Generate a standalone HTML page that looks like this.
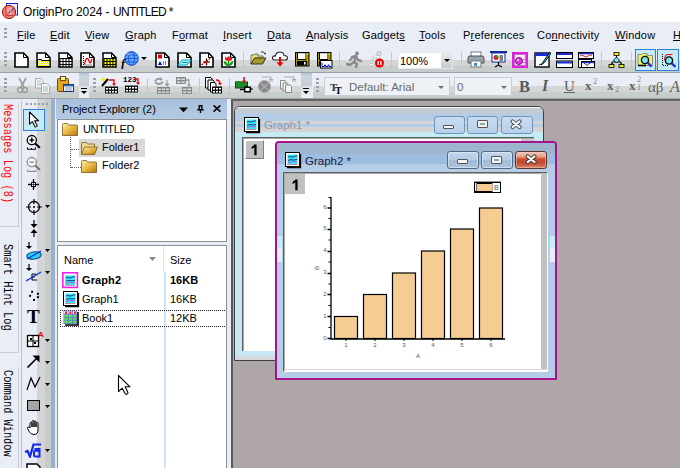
<!DOCTYPE html>
<html><head><meta charset="utf-8">
<style>
*{margin:0;padding:0;box-sizing:border-box}
html,body{width:680px;height:468px;overflow:hidden;background:#aea6a7;font-family:"Liberation Sans",sans-serif;font-size:12px;color:#000}
.a{position:absolute}
#title{left:0;top:0;width:680px;height:22px;background:#fff}
#menu{left:0;top:22px;width:680px;height:25px;background:#e9eef6}
.mi{position:absolute;top:7px;font-size:11px;letter-spacing:0.2px;color:#000;white-space:nowrap}
.mi u{text-decoration:underline;text-underline-offset:1px}
#tb{left:0;top:47px;width:680px;height:52px;background:#e9eef6}
.band{position:absolute;background:linear-gradient(#d6d6d6 0,#d4d5d5 6px,#c8cdce 6px,#c6cbcc 100%)}
.grip{position:absolute;width:3px;background:repeating-linear-gradient(#9aa0a8 0 2px,transparent 2px 4px)}
.sep{position:absolute;width:1px;background:#c2c6ca}
#left{left:0;top:99px;width:22px;height:369px;background:#e9eef6}
#vtb{left:22px;top:99px;width:35px;height:369px;background:linear-gradient(90deg,#e9eef6 0,#e9eef6 15px,#d4d4d4 15px,#d4d4d4 23px,#c6cbcb 23px,#c6cbcb 29px,#9ab0c8 29px,#9ab0c8 33px,#e6eaf0 33px)}
#pe{left:56px;top:99px;width:176px;height:369px;background:#e9eef6}
#mdi{left:231px;top:99px;width:449px;height:369px;background:#aea6a7;border-left:2px solid #5a5a5a;border-top:2px solid #646464}
.vt{position:absolute;font-family:"Liberation Mono",monospace;font-size:12px;line-height:16px;writing-mode:vertical-rl;white-space:nowrap;transform:scaleY(0.86);transform-origin:0 0}
</style></head>
<body>
<!-- Title bar -->
<div id="title" class="a">
  <svg class="a" style="left:2px;top:2px" width="18" height="18" viewBox="0 0 18 18">
    <rect x="4.5" y="1.5" width="11" height="11.5" fill="#eef4ff" stroke="#1828c8"/>
    <path d="M8 2V12M12 2V12M5 5H15M5 8H15" stroke="#b8d0f0" stroke-width="0.8"/>
    <circle cx="7" cy="10" r="6.6" fill="#f27c74" stroke="#9a1a14" stroke-width="1"/>
    <rect x="4" y="5.5" width="6" height="8" fill="#f8b0a0" opacity="0.8"/>
    <path d="M4 5V13.5H11" fill="none" stroke="#d02020" stroke-width="0.9"/>
    <path d="M5.5 12L7.5 10L9 9L10.5 7.5L12 6" fill="none" stroke="#1a2aa8" stroke-width="1.1" stroke-dasharray="1.2 0.8"/>
  </svg>
  <div class="a" style="left:23px;top:5px;font-size:12px;letter-spacing:-0.1px;color:#000;white-space:nowrap">OriginPro 2024 -</div><div class="a" style="left:113px;top:5px;font-size:12px;letter-spacing:-0.7px;color:#000;white-space:nowrap">UNTITLED *</div>
</div>
<!-- Menu -->
<div id="menu" class="a">
  <div class="grip" style="left:4px;top:6px;height:10px"></div>
  <div class="mi" style="left:17px"><u>F</u>ile</div>
  <div class="mi" style="left:50px"><u>E</u>dit</div>
  <div class="mi" style="left:85px"><u>V</u>iew</div>
  <div class="mi" style="left:125px"><u>G</u>raph</div>
  <div class="mi" style="left:172px">F<u>o</u>rmat</div>
  <div class="mi" style="left:223px"><u>I</u>nsert</div>
  <div class="mi" style="left:267px"><u>D</u>ata</div>
  <div class="mi" style="left:306px"><u>A</u>nalysis</div>
  <div class="mi" style="left:362px">Gadget<u>s</u></div>
  <div class="mi" style="left:419px"><u>T</u>ools</div>
  <div class="mi" style="left:463px">P<u>r</u>eferences</div>
  <div class="mi" style="left:537px">Co<u>n</u>nectivity</div>
  <div class="mi" style="left:615px"><u>W</u>indow</div>
  <div class="mi" style="left:673px"><u>H</u>elp</div>
</div>
<!-- Toolbars -->
<div id="tb" class="a">
  <!-- row1 band -->
  <div class="band" style="left:0;top:13px;width:680px;height:12px"></div>
  <div class="a" style="left:0;top:25px;width:680px;height:1px;background:#9ea2a6"></div>
  <!-- row2 bands -->
  <div class="band" style="left:0;top:39px;width:312px;height:12px"></div>
  <div class="band" style="left:313px;top:39px;width:367px;height:12px"></div>
  <div class="a" style="left:0;top:51px;width:680px;height:1px;background:#9ea2a6"></div>
  <div class="grip" style="left:4px;top:5px;height:14px"></div>
  <div class="grip" style="left:4px;top:31px;height:14px"></div>
  <div class="grip" style="left:93px;top:31px;height:14px"></div>
  <div class="grip" style="left:316px;top:31px;height:14px"></div>
  <!-- separators row1 -->
  <div class="sep" style="left:243px;top:5px;height:16px"></div>
  <div class="sep" style="left:339px;top:5px;height:16px"></div>
  <div class="sep" style="left:391px;top:5px;height:16px"></div>
  <div class="sep" style="left:461px;top:5px;height:16px"></div>
  <div class="sep" style="left:601px;top:5px;height:16px"></div>
  <div class="sep" style="left:631px;top:5px;height:16px"></div>
  <!-- separators row2 -->
  <div class="sep" style="left:147px;top:31px;height:17px"></div>
  <div class="sep" style="left:199px;top:31px;height:17px"></div>
  <div class="sep" style="left:229px;top:31px;height:17px"></div>
  <!-- chevrons -->
  <div class="a" style="left:79px;top:26px;width:10px;height:25px;background:linear-gradient(#a8c0dc 0,#cdd6de 3px,#c6ccd1 12px,#dde2e8 14px,#eef2f6 100%)"></div>
  <svg class="a" style="left:80px;top:41px" width="8" height="8"><rect x="1" y="0" width="6" height="1" fill="#000"/><path d="M1 3 H7 L4 6 Z" fill="#000"/></svg>
  <div class="a" style="left:301px;top:26px;width:11px;height:25px;background:linear-gradient(#a8c0dc 0,#cdd6de 3px,#c6ccd1 12px,#dde2e8 14px,#eef2f6 100%)"></div>
  <svg class="a" style="left:302px;top:41px" width="8" height="8"><rect x="1" y="0" width="6" height="1" fill="#000"/><path d="M1 3 H7 L4 6 Z" fill="#000"/></svg>

  <!-- ROW 1 ICONS (top = 5 => y 52) -->
  <svg class="a" style="left:14px;top:5px" width="16" height="16" viewBox="0 0 16 16"><path d="M1 1H9.5L14 5.5V15H1Z" fill="#fff" stroke="#000" stroke-width="1.6"/><path d="M9.5 1V5.5H14" fill="none" stroke="#000"/></svg>
  <svg class="a" style="left:36px;top:5px" width="16" height="16" viewBox="0 0 16 16"><defs><pattern id="chk" width="2" height="2" patternUnits="userSpaceOnUse"><rect width="2" height="2" fill="#f4f000"/><rect width="1" height="1" fill="#fffef0"/><rect x="1" y="1" width="1" height="1" fill="#fffef0"/></pattern></defs><path d="M1 1H9.5L14 5.5V15H1Z" fill="#fff" stroke="#000" stroke-width="1.5"/><path d="M9.5 1V5.5H14" fill="none" stroke="#000"/><path d="M1.5 14.5V7.5H5.5V8.5H14V14.5Z" fill="url(#chk)" stroke="#000" stroke-width="1"/></svg>
  <svg class="a" style="left:58px;top:5px" width="16" height="16" viewBox="0 0 16 16"><path d="M1 1H9.5L14 5.5V15H1Z" fill="#fff" stroke="#000" stroke-width="1.5"/><path d="M9.5 1V5.5H14" fill="none" stroke="#000"/><rect x="1.5" y="6" width="12.5" height="9" fill="#000"/><g fill="#fff"><rect x="2.5" y="7" width="2" height="2"/><rect x="5.5" y="7" width="2" height="2"/><rect x="8.5" y="7" width="2" height="2"/><rect x="11.5" y="7" width="1.8" height="2"/><rect x="2.5" y="10" width="2" height="2"/><rect x="5.5" y="10" width="2" height="2"/><rect x="8.5" y="10" width="2" height="2"/><rect x="11.5" y="10" width="1.8" height="2"/><rect x="2.5" y="13" width="2" height="1.3"/><rect x="5.5" y="13" width="2" height="1.3"/><rect x="8.5" y="13" width="2" height="1.3"/><rect x="11.5" y="13" width="1.8" height="1.3"/></g></svg>
  <svg class="a" style="left:80px;top:5px" width="16" height="16" viewBox="0 0 16 16"><path d="M1 1H9.5L14 5.5V15H1Z" fill="#fff" stroke="#000" stroke-width="1.6"/><path d="M9.5 1V5.5H14" fill="none" stroke="#000"/><path d="M3.5 4V13H12" fill="none" stroke="#000" stroke-dasharray="1 1"/><path d="M4.5 12C6 5 8 5 9 9S11 10 12 7" fill="none" stroke="#e00" stroke-width="1.3"/></svg>
  <svg class="a" style="left:102px;top:5px" width="16" height="16" viewBox="0 0 16 16"><path d="M1 1H9.5L14 5.5V15H1Z" fill="#fff" stroke="#000" stroke-width="1.5"/><path d="M9.5 1V5.5H14" fill="none" stroke="#000"/><rect x="1.5" y="6" width="12.5" height="9" fill="#000"/><g fill="#f8f000"><rect x="2.5" y="7" width="2" height="2"/><rect x="5.5" y="7" width="2" height="2"/><rect x="8.5" y="7" width="2" height="2"/><rect x="11.5" y="7" width="1.8" height="2"/><rect x="2.5" y="10" width="2" height="2"/><rect x="5.5" y="10" width="2" height="2"/><rect x="8.5" y="10" width="2" height="2"/><rect x="11.5" y="10" width="1.8" height="2"/><rect x="2.5" y="13" width="2" height="1.3"/><rect x="5.5" y="13" width="2" height="1.3"/><rect x="8.5" y="13" width="2" height="1.3"/><rect x="11.5" y="13" width="1.8" height="1.3"/></g></svg>
  <svg class="a" style="left:121px;top:4px" width="20" height="18" viewBox="0 0 20 18"><circle cx="10.5" cy="7.5" r="6.8" fill="#58a8ff" stroke="#1a48d0" stroke-width="1"/><ellipse cx="10.5" cy="7.5" rx="3" ry="6.8" fill="none" stroke="#1a48d0" stroke-width="0.8"/><path d="M3.7 7.5H17.3M4.8 4H16.2M4.8 11H16.2" stroke="#1a48d0" stroke-width="0.8"/><path d="M6 3.5Q8 2.5 9 4" stroke="#c0f0ff" stroke-width="0.8" fill="none"/><text x="0" y="17" font-family="Liberation Serif" font-style="italic" font-weight="bold" font-size="12" fill="#000">f</text></svg>
  <svg class="a" style="left:141px;top:10px" width="6" height="4"><path d="M0 0H6L3 3Z" fill="#000"/></svg>
  <svg class="a" style="left:155px;top:5px" width="16" height="16" viewBox="0 0 16 16"><path d="M1 1H9.5L14 5.5V15H1Z" fill="#fff" stroke="#000" stroke-width="1.6"/><path d="M9.5 1V5.5H14" fill="none" stroke="#000"/><rect x="3" y="2.5" width="4" height="4" fill="#e00"/><path d="M3 13L5 9L7 13Z" fill="#0000e0"/><path d="M8 10H12M8 12H12" stroke="#000" stroke-dasharray="1 1"/></svg>
  <svg class="a" style="left:177px;top:5px" width="16" height="16" viewBox="0 0 16 16"><path d="M1 1H9.5L14 5.5V15H1Z" fill="#fff" stroke="#000" stroke-width="1.6"/><path d="M9.5 1V5.5H14" fill="none" stroke="#000"/><path d="M5 8H14L10 13H1Z" fill="#9ff" stroke="#19b" stroke-width="1"/><path d="M5 10.5H11" stroke="#19b"/></svg>
  <svg class="a" style="left:199px;top:5px" width="16" height="16" viewBox="0 0 16 16"><path d="M1 1H9.5L14 5.5V15H1Z" fill="#fff" stroke="#000" stroke-width="1.6"/><path d="M9.5 1V5.5H14" fill="none" stroke="#000"/><path d="M2.5 13L13 5" stroke="#e00" stroke-width="1.3" stroke-dasharray="2 1"/><path d="M4 10H11M7.5 6.5V13.5" stroke="#000" stroke-width="1.2"/><circle cx="7.5" cy="10" r="1.3" fill="#e00"/></svg>
  <svg class="a" style="left:221px;top:5px" width="16" height="16" viewBox="0 0 16 16"><path d="M1 1H9.5L14 5.5V15H1Z" fill="#fff" stroke="#000" stroke-width="1.6"/><path d="M9.5 1V5.5H14" fill="none" stroke="#000"/><path d="M4 4L5.5 6L7.5 4L9.5 6L11 4V8Q7.5 10 4 8Z" fill="#e02020"/><path d="M7.5 9V14" stroke="#1a8a1a" stroke-width="1.3"/><path d="M2.5 9Q6 9 7.5 14Q3 14 2.5 9Z M12.5 9Q9 9 7.5 14Q12 14 12.5 9Z" fill="#1aa01a"/></svg>
  <!-- open folder -->
  <svg class="a" style="left:250px;top:3px" width="18" height="16" viewBox="0 0 18 16"><path d="M11 2Q14 1 15 4" fill="none" stroke="#333" stroke-width="1"/><path d="M14 3.5L15.5 5L16 2.5Z" fill="#333"/><path d="M1 5H4L5 4H8V6H13V8H5L1 14Z" fill="#f0e070" stroke="#555" stroke-width="0.8"/><path d="M1 14L4.5 8H16L12.5 14Z" fill="#a89a2c" stroke="#333" stroke-width="1"/></svg>
  <!-- cloud -->
  <svg class="a" style="left:271px;top:3px" width="18" height="18" viewBox="0 0 18 18"><path d="M4 10Q1 10 1.5 7.5Q2 5.5 4.5 6Q5 2 9 2Q12.5 2 13 5.5Q16.5 5.5 16.5 8Q16.5 10 14 10Z" fill="#fff" stroke="#222" stroke-width="1.1"/><path d="M9 7V13" stroke="#e00" stroke-width="2"/><path d="M5.5 12.5H12.5L9 16.5Z" fill="#e00"/></svg>
  <!-- floppy -->
  <svg class="a" style="left:295px;top:5px" width="15" height="15" viewBox="0 0 15 15"><rect x="0" y="0" width="14.5" height="14.5" fill="#000"/><rect x="1" y="1" width="12.5" height="12.5" fill="#a89800"/><rect x="2" y="1" width="9" height="7" fill="#000"/><rect x="3" y="1.2" width="7.5" height="5.8" fill="#fff"/><rect x="2" y="9" width="10" height="4.5" fill="#000"/><rect x="9" y="10" width="1.6" height="2.5" fill="#fff"/><rect x="12" y="1.5" width="1" height="1" fill="#fff"/></svg>
  <svg class="a" style="left:317px;top:5px" width="16" height="17" viewBox="0 0 16 17"><rect x="0" y="0" width="14.5" height="14.5" fill="#000"/><rect x="1" y="1" width="12.5" height="12.5" fill="#a89800"/><rect x="2" y="1" width="9" height="7" fill="#000"/><rect x="3" y="1.2" width="7.5" height="5.8" fill="#fff"/><rect x="2" y="9" width="10" height="4.5" fill="#000"/><rect x="12" y="1.5" width="1" height="1" fill="#fff"/><rect x="3" y="8" width="12.5" height="8.5" fill="#000"/><rect x="4" y="9" width="10.5" height="6.5" fill="#fff"/><path d="M5 14.5V10.5M5 14.5H7.5V13H8.5V14.5H11V13H12V14.5H14" fill="none" stroke="#0010e0" stroke-width="1"/></svg>
  <!-- running men -->
  <svg class="a" style="left:346px;top:4px" width="17" height="17" viewBox="0 0 17 17"><circle cx="11" cy="2.5" r="2" fill="#8a8a8a"/><path d="M6 6L10 5L12 9L15 10M10 5L8 11L11 13L10 16M8 11L4 14L1 13M7 6L4 9" fill="none" stroke="#8a8a8a" stroke-width="2.4" stroke-linecap="round"/></svg>
  <svg class="a" style="left:368px;top:4px" width="17" height="17" viewBox="0 0 17 17"><circle cx="11" cy="2.5" r="2" fill="none" stroke="#999" stroke-width="0.8"/><path d="M6 6L10 5L12 9L15 10M10 5L8 11L11 13L10 16M8 11L4 14L1 13M7 6L4 9" fill="none" stroke="#bbb" stroke-width="2.2" stroke-linecap="round"/><path d="M6 6L10 5L12 9L15 10M10 5L8 11L11 13L10 16M8 11L4 14L1 13M7 6L4 9" fill="none" stroke="#fff" stroke-width="1" stroke-linecap="round"/><circle cx="11.5" cy="12" r="4.5" fill="#e00"/><rect x="9.5" y="10" width="1.3" height="4" fill="#fff"/><rect x="12.2" y="10" width="1.3" height="4" fill="#fff"/></svg>
  <!-- 100% combo -->
  <div class="a" style="left:398px;top:5px;width:55px;height:17px;background:#fff;border:1px solid #e4e8ee"></div>
  <div class="a" style="left:441px;top:6px;width:11px;height:15px;background:linear-gradient(#e8ebef,#c7cbd0)"></div>
  <svg class="a" style="left:444px;top:12px" width="6" height="4"><path d="M0 0H6L3 3Z" fill="#000"/></svg>
  <div class="a" style="left:400px;top:8px;font-size:11px;color:#000">100%</div>
  <!-- printer -->
  <svg class="a" style="left:467px;top:4px" width="18" height="17" viewBox="0 0 18 17"><rect x="4" y="1" width="10" height="5" fill="#fff" stroke="#777"/><path d="M1 7Q1 5 3 5H15Q17 5 17 7V12H1Z" fill="#9aa4ae" stroke="#555"/><rect x="4" y="10" width="10" height="6" fill="#fff" stroke="#777"/><rect x="7" y="12" width="3" height="3" fill="#3a8ad8"/></svg>
  <!-- presentation -->
  <svg class="a" style="left:490px;top:4px" width="17" height="17" viewBox="0 0 17 17"><rect x="0" y="0" width="17" height="2" fill="#1428a0"/><rect x="2" y="2" width="13" height="9" fill="#fff" stroke="#1428a0"/><circle cx="6" cy="6.5" r="2.5" fill="#e02020"/><path d="M6 6.5V4A2.5 2.5 0 0 1 8.5 6.5Z" fill="#20a020"/><path d="M9.5 5H13M9.5 7H13M9.5 9H13" stroke="#000" stroke-width="1"/><path d="M8.5 11V14M5 16L8.5 14L12 16" fill="none" stroke="#000" stroke-width="1.3"/></svg>
  <!-- magenta -->
  <svg class="a" style="left:512px;top:5px" width="16" height="16" viewBox="0 0 16 16"><rect x="1" y="1" width="14" height="14" fill="#f4e6f4" stroke="#e020e0" stroke-width="2"/><rect x="2.5" y="2.5" width="11" height="11" fill="#f8f0f8" stroke="#a020a0" stroke-width="0.6"/><circle cx="7" cy="9" r="3.6" fill="#e030e0" stroke="#800080" stroke-width="0.8"/><circle cx="6" cy="8" r="1" fill="#fff"/><path d="M12 7V8M12 10V11" stroke="#800080"/></svg>
  <!-- pen doc -->
  <svg class="a" style="left:534px;top:4px" width="17" height="17" viewBox="0 0 17 17"><rect x="1" y="2" width="14" height="14" fill="#fff" stroke="#000" stroke-width="1.4"/><rect x="1" y="2" width="14" height="3" fill="#1a2ed0"/><path d="M16 1L9 11L7 14L10 12L16.5 3Z" fill="#20c8d8" stroke="#000" stroke-width="0.9"/><path d="M5 14L7 13" stroke="#000"/></svg>
  <!-- two bars -->
  <svg class="a" style="left:556px;top:5px" width="17" height="16" viewBox="0 0 17 16"><rect x="0.5" y="0.5" width="16" height="6" fill="#fff" stroke="#000"/><rect x="1" y="1" width="15" height="2" fill="#1a2ed0"/><rect x="0.5" y="9" width="16" height="6.5" fill="#fff" stroke="#000"/><rect x="1" y="9.5" width="15" height="2" fill="#1a2ed0"/></svg>
  <!-- layer doc -->
  <svg class="a" style="left:578px;top:5px" width="17" height="16" viewBox="0 0 17 16"><rect x="0.5" y="0.5" width="15" height="6" fill="#fff" stroke="#000"/><rect x="1" y="0.8" width="14" height="1.5" fill="#1a2ed0"/><path d="M2 4Q4 2 6 4T10 4T14 3.5" fill="none" stroke="#e02020" stroke-width="1"/><rect x="0.5" y="7.5" width="13" height="8" fill="#fff" stroke="#000"/><rect x="3.5" y="9.5" width="13" height="6" fill="#fff" stroke="#000"/><rect x="4" y="10" width="12" height="1.2" fill="#1a2ed0"/><path d="M6 11L9 13.5L12 11" fill="none" stroke="#000" stroke-width="0.8"/></svg>
  <!-- network -->
  <svg class="a" style="left:608px;top:5px" width="17" height="17" viewBox="0 0 17 17"><path d="M8.5 3V6M4 11V13M13 11V13M8.5 10H4V12M8.5 10H13V12" fill="none" stroke="#000"/><rect x="6" y="0.5" width="5" height="3" fill="#f4ec20" stroke="#000" stroke-width="0.8"/><path d="M8.5 5L11.5 8L8.5 11L5.5 8Z" fill="#7de0ea" stroke="#000" stroke-width="0.8"/><rect x="1" y="12.5" width="5" height="3" fill="#f4ec20" stroke="#000" stroke-width="0.8"/><rect x="11" y="12.5" width="5" height="3" fill="#f4ec20" stroke="#000" stroke-width="0.8"/></svg>
  <!-- selected buttons -->
  <div class="a" style="left:635px;top:2px;width:21px;height:22px;background:#c6eaf6;border:1.5px solid #2a82e0"></div>
  <div class="a" style="left:657px;top:2px;width:22px;height:22px;background:#c6eaf6;border:1.5px solid #2a82e0"></div>
  <svg class="a" style="left:637px;top:5px" width="17" height="17" viewBox="0 0 17 17"><path d="M1 2.5H5L6 1.5H10V3.5H15.5V13.5H1Z" fill="#f0f060" stroke="#777" stroke-width="0.8"/><path d="M1 13.5H9" stroke="#000" stroke-width="1.6"/><circle cx="8" cy="8" r="3.6" fill="#80e4ee" stroke="#000" stroke-width="1.4"/><path d="M10.6 10.6L14.6 14.6" stroke="#1a2ed0" stroke-width="2.2"/></svg>
  <svg class="a" style="left:660px;top:5px" width="17" height="17" viewBox="0 0 17 17"><path d="M2.5 2V13.5H8" fill="none" stroke="#000" stroke-dasharray="1 1"/><path d="M4.5 8Q5 2 8 2.5T12.5 2" fill="none" stroke="#e02020" stroke-width="1.1"/><circle cx="9" cy="8.5" r="3.6" fill="#80e4ee" stroke="#000" stroke-width="1.4"/><path d="M11.6 11.1L15.4 14.9" stroke="#1a2ed0" stroke-width="2.2"/></svg>

  <!-- ROW 2 ICONS (top=30 => y 77) -->
  <svg class="a" style="left:17px;top:30px" width="11" height="17" viewBox="0 0 11 17"><path d="M2 1L7 10M9 1L4 10" stroke="#9a9a9a" stroke-width="1.6"/><circle cx="3" cy="13" r="2.5" fill="none" stroke="#9a9a9a" stroke-width="1.4"/><circle cx="8" cy="13" r="2.5" fill="none" stroke="#9a9a9a" stroke-width="1.4"/></svg>
  <svg class="a" style="left:35px;top:31px" width="16" height="16" viewBox="0 0 16 16"><path d="M0.5 0.5H6L8 2.5V10H0.5Z" fill="#f4f4f4" stroke="#aaa"/><path d="M2 3H6M2 5H6M2 7H6" stroke="#bbb"/><path d="M6.5 5.5H12L14.5 8V15.5H6.5Z" fill="#f8f8f8" stroke="#aaa"/><path d="M8 9H13M8 11H13M8 13H13" stroke="#9bb"/></svg>
  <svg class="a" style="left:57px;top:29px" width="17" height="17" viewBox="0 0 17 17"><rect x="0.5" y="2.5" width="11" height="13" rx="1" fill="#e4a820" stroke="#6a4a10"/><rect x="3.5" y="0.5" width="5" height="4" fill="#fff2a0" stroke="#6a4a10"/><rect x="6.5" y="8.5" width="10" height="7" fill="#fff" stroke="#1a3a6a"/><rect x="7" y="9" width="9" height="1.5" fill="#3a6ab8"/><path d="M8 12H15M8 14H15" stroke="#7a9ad8"/></svg>
  <svg class="a" style="left:101px;top:30px" width="18" height="17" viewBox="0 0 18 17"><path d="M1 1L4 4M4 1L1 4M2.5 0V5M0 2.5H5" stroke="#f4f020" stroke-width="1"/><path d="M7 2L1 9" stroke="#000" stroke-width="2"/><path d="M8 3H13V8" fill="none" stroke="#e00" stroke-width="1.3"/><path d="M11 6.5H15L13 9Z" fill="#e00"/><rect x="4" y="9.5" width="13" height="7" fill="#111"/><g fill="#fff"><rect x="5" y="11" width="2" height="1.5"/><rect x="8" y="11" width="2" height="1.5"/><rect x="11" y="11" width="2" height="1.5"/><rect x="14" y="11" width="2" height="1.5"/><rect x="5" y="14" width="2" height="1.5"/><rect x="8" y="14" width="2" height="1.5"/><rect x="11" y="14" width="2" height="1.5"/><rect x="14" y="14" width="2" height="1.5"/></g></svg>
  <svg class="a" style="left:123px;top:29px" width="18" height="17" viewBox="0 0 18 17"><text x="0" y="6" font-family="Liberation Mono" font-weight="bold" font-size="7.5" fill="#000">123</text><path d="M12 3H15V7" fill="none" stroke="#e00" stroke-width="1.3"/><path d="M13 6.5H17L15 9Z" fill="#e00"/><rect x="2" y="9.5" width="13" height="7" fill="#111"/><g fill="#fff"><rect x="3" y="11" width="2" height="1.5"/><rect x="6" y="11" width="2" height="1.5"/><rect x="9" y="11" width="2" height="1.5"/><rect x="12" y="11" width="2" height="1.5"/><rect x="3" y="14" width="2" height="1.5"/><rect x="6" y="14" width="2" height="1.5"/><rect x="9" y="14" width="2" height="1.5"/><rect x="12" y="14" width="2" height="1.5"/></g></svg>
  <svg class="a" style="left:154px;top:30px" width="17" height="17" viewBox="0 0 17 17"><path d="M1 4Q4 0 8 3M8 3L6 1M1 5Q5 9 9 5" fill="none" stroke="#999" stroke-width="1.8"/><path d="M13 3V8M11 7H15L13 9Z" fill="#999" stroke="#999"/><rect x="3" y="10" width="13" height="7" fill="#888"/><g fill="#ddd"><rect x="4" y="11.5" width="3" height="1.5"/><rect x="8" y="11.5" width="3" height="1.5"/><rect x="12" y="11.5" width="3" height="1.5"/><rect x="4" y="14.5" width="3" height="1.5"/><rect x="8" y="14.5" width="3" height="1.5"/><rect x="12" y="14.5" width="3" height="1.5"/></g></svg>
  <svg class="a" style="left:176px;top:29px" width="17" height="18" viewBox="0 0 17 18"><rect x="0" y="1" width="10" height="7" fill="#888"/><g fill="#ddd"><rect x="1" y="2.5" width="3.5" height="1.5"/><rect x="5.5" y="2.5" width="3.5" height="1.5"/><rect x="1" y="5.5" width="3.5" height="1.5"/><rect x="5.5" y="5.5" width="3.5" height="1.5"/></g><path d="M10 4H13V9" fill="none" stroke="#999" stroke-width="1.3"/><path d="M11 8.5H15L13 11Z" fill="#999"/><rect x="6" y="11" width="10" height="7" fill="#888"/><g fill="#ddd"><rect x="7" y="12.5" width="3.5" height="1.5"/><rect x="11.5" y="12.5" width="3.5" height="1.5"/><rect x="7" y="15.5" width="3.5" height="1.5"/><rect x="11.5" y="15.5" width="3.5" height="1.5"/></g></svg>
  <svg class="a" style="left:205px;top:30px" width="18" height="17" viewBox="0 0 18 17"><path d="M0.5 0.5H6L7 2V11H0.5Z" fill="#fff" stroke="#000"/><path d="M3 3H8L9 4.5V13H3Z" fill="#fff" stroke="#000"/><path d="M5.5 5.5H10L11 7V15H5.5Z" fill="#fff" stroke="#000"/><path d="M11 3Q15 3 15 7" fill="none" stroke="#e00" stroke-width="1.5"/><path d="M13 6H17L15 8.5Z" fill="#e00"/><rect x="7" y="9.5" width="10" height="7" fill="#111"/><g fill="#fff"><rect x="8" y="11" width="2" height="1.5"/><rect x="11" y="11" width="2" height="1.5"/><rect x="14" y="11" width="2" height="1.5"/><rect x="8" y="14" width="2" height="1.5"/><rect x="11" y="14" width="2" height="1.5"/><rect x="14" y="14" width="2" height="1.5"/></g></svg>
  <svg class="a" style="left:235px;top:30px" width="18" height="17" viewBox="0 0 18 17"><rect x="0.5" y="5" width="12" height="6" fill="#1a8a2a" stroke="#0a4a10"/><rect x="0.5" y="4" width="5" height="2" fill="#1a8a2a"/><path d="M9 0V4" stroke="#e00" stroke-width="1.5"/><path d="M7 3.5H11L9 6Z" fill="#e00"/><path d="M5 12.5H9" stroke="#000" stroke-width="1.5"/><rect x="9" y="9.5" width="7" height="6" fill="#000"/><path d="M16 12H17.5" stroke="#000" stroke-width="1.3"/><rect x="10.5" y="11" width="4" height="3" fill="#fff"/><path d="M9 10.5L12.5 9.5" stroke="#000"/></svg>
  <svg class="a" style="left:257px;top:29px" width="17" height="17" viewBox="0 0 17 17"><path d="M5 1H14V3" fill="none" stroke="#aaa" stroke-width="1"/><path d="M12 3.5H16M13 3.5V6M15 3.5V6" stroke="#aaa" stroke-width="1"/><circle cx="7.5" cy="10.5" r="6" fill="#888" stroke="#aaa"/><path d="M4 7L11 14M11 7L4 14" stroke="#aaa" stroke-width="1.5"/></svg>
  <svg class="a" style="left:280px;top:29px" width="17" height="17" viewBox="0 0 17 17"><path d="M4 1H14V3" fill="none" stroke="#aaa" stroke-width="1"/><path d="M12 3.5H16M13 3.5V6M15 3.5V6" stroke="#aaa" stroke-width="1"/><path d="M0.5 4.5H5L6 6V13H0.5Z" fill="#f4f4f4" stroke="#888"/><path d="M3 7H7L8 8.5V15H3Z" fill="#f4f4f4" stroke="#888"/><path d="M5.5 9H10L11.5 10.5V16.5H5.5Z" fill="#f4f4f4" stroke="#888"/></svg>

  <!-- FORMAT TOOLBAR -->
  <div class="a" style="left:324px;top:30px;width:126px;height:19px;background:#eef1f6;border:1px solid #c9ced6"></div>
  <svg class="a" style="left:330px;top:35px" width="15" height="12" viewBox="0 0 15 12"><text x="0" y="9" font-family="Liberation Serif" font-weight="bold" font-size="11" fill="#333">T</text><text x="5" y="11.5" font-family="Liberation Serif" font-weight="bold" font-size="10" fill="#000">T</text></svg>
  <div class="a" style="left:349px;top:34px;font-size:11.5px;color:#6b6b6b;white-space:nowrap">Default: Arial</div>
  <svg class="a" style="left:438px;top:39px" width="6" height="4"><path d="M0 0H6L3 3Z" fill="#707070"/></svg>
  <div class="a" style="left:454px;top:30px;width:58px;height:19px;background:#eef1f6;border:1px solid #c9ced6"></div>
  <div class="a" style="left:457px;top:34px;font-size:11.5px;color:#6b6b6b">0</div>
  <svg class="a" style="left:501px;top:39px" width="6" height="4"><path d="M0 0H6L3 3Z" fill="#707070"/></svg>
  <div class="a" style="left:519px;top:30px;font-family:'Liberation Serif';font-weight:bold;font-size:16.5px;color:#535b5b;letter-spacing:0">B</div>
  <div class="a" style="left:542px;top:30px;font-family:'Liberation Serif';font-weight:bold;font-style:italic;font-size:16px;color:#535b5b">I</div>
  <div class="a" style="left:564px;top:31px;font-family:'Liberation Serif';font-size:15px;color:#5a6262;text-decoration:underline;text-underline-offset:1px">U</div>
  <div class="a" style="left:585px;top:31px;font-family:'Liberation Serif';font-weight:bold;font-size:13px;color:#5a6262;line-height:16px">x</div><div class="a" style="left:593px;top:29px;font-family:'Liberation Serif';font-size:8.5px;color:#8a8a8a;line-height:10px">2</div>
  <div class="a" style="left:607px;top:31px;font-family:'Liberation Serif';font-weight:bold;font-size:13px;color:#5a6262;line-height:16px">x</div><div class="a" style="left:615px;top:37px;font-family:'Liberation Serif';font-size:8.5px;color:#8a8a8a;line-height:10px">2</div>
  <div class="a" style="left:629px;top:31px;font-family:'Liberation Serif';font-weight:bold;font-size:13px;color:#5a6262;line-height:16px">x</div>
  <div class="a" style="left:637px;top:28px;font-family:'Liberation Serif';font-size:8.5px;color:#8a8a8a;line-height:8px">2<br>1</div>
  <div class="a" style="left:648px;top:32px;font-family:'Liberation Serif';font-size:15px;color:#5a6262">αβ</div>
  <div class="a" style="left:670px;top:31px;font-family:'Liberation Serif';font-style:italic;font-size:16px;color:#5a6262">A</div>
</div>
<!-- Left strip -->
<div id="left" class="a"></div>
<div class="a" style="left:18px;top:103px;width:1px;height:123px;background:#c9ccd0"></div>
<div class="a" style="left:0;top:226px;width:19px;height:1px;background:#c9ccd0"></div>
<div class="a" style="left:18px;top:241px;width:1px;height:111px;background:#c9ccd0"></div>
<div class="a" style="left:0;top:352px;width:19px;height:1px;background:#c9ccd0"></div>
<div class="a" style="left:18px;top:367px;width:1px;height:101px;background:#c9ccd0"></div>
<div class="a" style="left:21px;top:101px;width:1px;height:367px;background:#c4c4c4"></div>
<div class="vt" style="left:-1px;top:104px;color:#f00">Messages Log (8)</div>
<div class="vt" style="left:-1px;top:244px;color:#000">Smart Hint Log</div>
<div class="vt" style="left:-1px;top:370px;color:#000">Command Window</div>
<!-- Vertical toolbar -->
<div id="vtb" class="a"></div>
<div class="a" style="left:26px;top:103px;width:24px;height:2px;background:repeating-linear-gradient(90deg,#9aa0a8 0 2px,transparent 2px 4px)"></div>
<div class="a" style="left:23px;top:109px;width:22px;height:22px;background:#c6eaf6;border:1.5px solid #2a82e0"></div>
<svg class="a" style="left:28px;top:111px" width="14" height="18" viewBox="0 0 14 18"><path d="M1.5 1V13.2L4.3 10.6L6.9 15.6Q7.3 16.2 7.9 15.9L8.9 15.4Q9.4 15 9.1 14.4L6.6 9.8H10.6Z" fill="#fff" stroke="#000" stroke-width="1.05" stroke-linejoin="round"/></svg>
<!-- zoom in -->
<svg class="a" style="left:25px;top:134px" width="20" height="18" viewBox="0 0 20 18"><circle cx="6.8" cy="6.1" r="4.6" fill="#fff" stroke="#000" stroke-width="1.3"/><path d="M4.3 6.1H9.3M6.8 3.6V8.6" stroke="#000" stroke-width="1.4"/><path d="M10.2 9.5L14.8 13.8" stroke="#000" stroke-width="2.2"/><path d="M2.5 13.3V15.3H10.5V13.3M6.5 14V15.3" fill="none" stroke="#000" stroke-width="1"/></svg>
<svg class="a" style="left:25px;top:156px" width="20" height="18" viewBox="0 0 20 18"><circle cx="6.8" cy="6.1" r="4.6" fill="#fff" stroke="#8a8a8a" stroke-width="1.3"/><path d="M4.3 6.1H9.3" stroke="#8a8a8a" stroke-width="1.4"/><path d="M10.2 9.5L14.8 13.8" stroke="#707070" stroke-width="2.2"/><path d="M2.5 13.5V15.5H11V13.5M5.3 14.3V15.5M8.1 14.3V15.5" fill="none" stroke="#8a8a8a" stroke-width="1"/></svg>
<svg class="a" style="left:27px;top:178px" width="14" height="14" viewBox="0 0 14 14"><path d="M6.5 1V12M1 6.5H12" stroke="#000" stroke-width="1.3"/><rect x="4.5" y="4.5" width="4" height="4" fill="#fff" stroke="#000" stroke-width="1"/><path d="M6.5 5V8M5 6.5H8" stroke="#000" stroke-width="0.7"/></svg>
<svg class="a" style="left:25px;top:198px" width="18" height="18" viewBox="0 0 18 18"><circle cx="9" cy="9" r="5.5" fill="none" stroke="#000" stroke-width="1.3"/><path d="M9 1V6M9 12V17M1 9H6M12 9H17" stroke="#000" stroke-width="1.2"/><circle cx="9" cy="9" r="1" fill="#000"/></svg>
<svg class="a" style="left:45px;top:205px" width="6" height="4"><path d="M0 0H5L2.5 3Z" fill="#000"/></svg>
<svg class="a" style="left:28px;top:220px" width="12" height="17" viewBox="0 0 12 17"><path d="M6 0V7M6 10V17" stroke="#000" stroke-width="1.2"/><path d="M2.5 4H9.5L6 8Z M2.5 13H9.5L6 9Z" fill="#000"/></svg>
<svg class="a" style="left:24px;top:242px" width="22" height="18" viewBox="0 0 22 18"><path d="M5 0V6" stroke="#000" stroke-width="1.2"/><path d="M2 4H8L5 7Z" fill="#000"/><ellipse cx="10" cy="13.5" rx="7.3" ry="3.6" fill="#28d0f4" stroke="#0a3a80" stroke-width="1" transform="rotate(-8 10 13.5)"/><path d="M3 17L17 9" stroke="#0a2ad0" stroke-width="1.1"/></svg>
<svg class="a" style="left:45px;top:249px" width="6" height="4"><path d="M0 0H5L2.5 3Z" fill="#000"/></svg>
<svg class="a" style="left:24px;top:264px" width="22" height="18" viewBox="0 0 22 18"><path d="M5 0V6" stroke="#000" stroke-width="1.2"/><path d="M2 4H8L5 7Z" fill="#000"/><path d="M8 10V16M8 10H12M8 13H11M8 16H13" fill="none" stroke="#000" stroke-width="1.1"/><path d="M12 10V11.5" stroke="#000"/><path d="M2 17L17 8" stroke="#0a2ad0" stroke-width="1.1"/></svg>
<svg class="a" style="left:45px;top:271px" width="6" height="4"><path d="M0 0H5L2.5 3Z" fill="#000"/></svg>
<svg class="a" style="left:28px;top:289px" width="12" height="12" viewBox="0 0 12 12"><g fill="#000"><rect x="3.1" y="1.8" width="2" height="2"/><rect x="1.1" y="5.8" width="2" height="2"/><rect x="8.9" y="3.8" width="2" height="2"/><rect x="8.9" y="7.1" width="2" height="2"/><rect x="5" y="9.9" width="2" height="2"/></g></svg>
<div class="a" style="left:27px;top:307px;font-family:'Liberation Serif';font-weight:bold;font-size:19px;color:#000;line-height:20px">T</div>
<svg class="a" style="left:26px;top:330px" width="20" height="18" viewBox="0 0 20 18"><rect x="1.5" y="5.5" width="11" height="11" fill="#fff" stroke="#000" stroke-width="1.3"/><path d="M7 6V16M2 11H12" stroke="#000" stroke-width="1"/><rect x="4" y="8" width="2" height="2" fill="#000"/><rect x="8" y="12" width="2" height="2" fill="#000"/><text x="12" y="7" font-family="Liberation Sans" font-weight="bold" font-size="8" fill="#e00">A</text></svg>
<svg class="a" style="left:45px;top:339px" width="6" height="4"><path d="M0 0H5L2.5 3Z" fill="#000"/></svg>
<svg class="a" style="left:26px;top:353px" width="16" height="16" viewBox="0 0 16 16"><path d="M1.5 14.5L12.5 3.5" stroke="#000" stroke-width="1.7"/><path d="M6.5 2.5H13.5V9.5Z" fill="#000"/></svg>
<svg class="a" style="left:45px;top:361px" width="6" height="4"><path d="M0 0H5L2.5 3Z" fill="#000"/></svg>
<svg class="a" style="left:26px;top:375px" width="16" height="16" viewBox="0 0 16 16"><path d="M1 15L5 3L9 12L14 2" fill="none" stroke="#000" stroke-width="1.2"/></svg>
<svg class="a" style="left:45px;top:383px" width="6" height="4"><path d="M0 0H5L2.5 3Z" fill="#000"/></svg>
<div class="a" style="left:27px;top:400px;width:13px;height:11px;background:#a4a4a4;border:1px solid #000"></div>
<svg class="a" style="left:45px;top:405px" width="6" height="4"><path d="M0 0H5L2.5 3Z" fill="#000"/></svg>
<svg class="a" style="left:26px;top:419px" width="17" height="17" viewBox="0 0 17 17"><path d="M4 9V4.5Q4 3.5 5 3.5Q6 3.5 6 4.5V8V2.5Q6 1.5 7 1.5Q8 1.5 8 2.5V8V3Q8 2 9 2Q10 2 10 3V8V4.5Q10 3.5 11 3.5Q12 3.5 12 4.5V11Q12 15.5 8 15.5Q5 15.5 3.5 13L1.5 9.5Q1 8.5 2 8Q3 7.5 4 9Z" fill="#fff" stroke="#000" stroke-width="1"/></svg>
<svg class="a" style="left:24px;top:443px" width="18" height="15" viewBox="0 0 18 15"><path d="M1 9L3.5 8L6 13.5L9.5 1.5H17" fill="none" stroke="#1428f0" stroke-width="2.2" stroke-linejoin="miter"/><path d="M10.5 6H15.5V13.5H11.5Q10 13.5 10 12V9Q10 7.8 11.5 7.8H15" fill="none" stroke="#1428f0" stroke-width="2"/></svg>
<svg class="a" style="left:45px;top:449px" width="6" height="4"><path d="M0 0H5L2.5 3Z" fill="#000"/></svg>
<svg class="a" style="left:26px;top:463px" width="16" height="6" viewBox="0 0 16 6"><path d="M1 6V1H11L14 4V6" fill="#fff" stroke="#000" stroke-width="1.5"/></svg>

<!-- Project Explorer -->
<div id="pe" class="a"></div>
<div class="a" style="left:56px;top:99px;width:172px;height:20px;background:linear-gradient(#a8c0dd,#b4c9e3)"></div>
<div class="a" style="left:62px;top:103px;font-size:11px;letter-spacing:-0.05px;color:#000;white-space:nowrap">Project Explorer (2)</div>
<svg class="a" style="left:179px;top:107px" width="9" height="6"><path d="M0 0.5H9L4.5 5.2Z" fill="#000"/></svg>
<svg class="a" style="left:197px;top:105px" width="7" height="8" viewBox="0 0 7 8"><path d="M1.5 0.7H5.5M2.2 0.7V4.5M4.8 0.7V4.5M0.3 4.7H6.7M3.5 4.7V8" stroke="#000" stroke-width="1.4"/></svg>
<svg class="a" style="left:213px;top:105px" width="8" height="7" viewBox="0 0 8 7"><path d="M0.6 0.4L7.4 6.6M7.4 0.4L0.6 6.6" stroke="#000" stroke-width="1.6"/></svg>
<div class="a" style="left:57px;top:119px;width:170px;height:123px;background:#fff;border:1px solid #8e9296"></div>
<div class="a" style="left:57px;top:245px;width:170px;height:223px;background:#fff;border:1px solid #8e9296;border-bottom:none"></div>
<div class="a" style="left:227px;top:99px;width:4px;height:369px;background:#e6edf7"></div>
<!-- tree -->
<svg class="a" style="left:62px;top:123px" width="16" height="13" viewBox="0 0 16 13"><defs><linearGradient id="fg" x1="0" y1="0" x2="1" y2="1"><stop offset="0" stop-color="#fff0b0"/><stop offset="0.5" stop-color="#e8b840"/><stop offset="1" stop-color="#b07810"/></linearGradient></defs><path d="M0.5 2.5V1.5Q0.5 0.5 1.5 0.5H5.5L6.5 2H14.5Q15.5 2 15.5 3V12.5H0.5Z" fill="url(#fg)" stroke="#7a5a20" stroke-width="0.8"/></svg>
<div class="a" style="left:83px;top:123px;font-size:11px;letter-spacing:-0.35px;color:#000">UNTITLED</div>
<div class="a" style="left:70px;top:137px;width:1px;height:31px;border-left:1px dotted #666"></div>
<div class="a" style="left:71px;top:149px;width:10px;height:1px;border-top:1px dotted #666"></div>
<div class="a" style="left:71px;top:167px;width:10px;height:1px;border-top:1px dotted #666"></div>
<div class="a" style="left:79px;top:139px;width:66px;height:18px;background:#d9d9d9"></div>
<svg class="a" style="left:81px;top:142px" width="17" height="13" viewBox="0 0 17 13"><path d="M0.5 12.5V1.5Q0.5 0.5 1.5 0.5H5.5L6.5 2H13.5V5" fill="#f4d890" stroke="#7a5a20" stroke-width="0.8"/><path d="M0.5 12.5L3.5 5H16.5L13.5 12.5Z" fill="url(#fg)" stroke="#7a5a20" stroke-width="0.8"/></svg>
<div class="a" style="left:102px;top:141px;font-size:11px;color:#000">Folder1</div>
<svg class="a" style="left:81px;top:160px" width="16" height="13" viewBox="0 0 16 13"><path d="M0.5 2.5V1.5Q0.5 0.5 1.5 0.5H5.5L6.5 2H14.5Q15.5 2 15.5 3V12.5H0.5Z" fill="url(#fg)" stroke="#7a5a20" stroke-width="0.8"/></svg>
<div class="a" style="left:102px;top:159px;font-size:11px;color:#000">Folder2</div>
<!-- list -->
<div class="a" style="left:64px;top:254px;font-size:11px;color:#000">Name</div>
<svg class="a" style="left:149px;top:257px" width="7" height="5"><path d="M0 0H7L3.5 4Z" fill="#888"/></svg>
<div class="a" style="left:163px;top:246px;width:1px;height:26px;background:#e0e4ea"></div>
<div class="a" style="left:164px;top:272px;width:2px;height:196px;background:linear-gradient(90deg,#bcdcf4,#d8ecfa)"></div>
<div class="a" style="left:170px;top:254px;font-size:11px;color:#000">Size</div>
<svg class="a" style="left:62px;top:272px" width="17" height="17" viewBox="0 0 17 17"><rect x="0.8" y="0.8" width="14.6" height="14.6" fill="#fff" stroke="#f020f0" stroke-width="1.6"/><g transform="translate(0.8 0.8)"><rect x="2.5" y="2.5" width="10" height="10" fill="#38e8f0"/><path d="M3 5.2Q4.5 4 6 4.8T9 4.5T12.2 4.2" fill="none" stroke="#102080" stroke-width="0.9"/><path d="M3 8.6Q5 7.2 7 7.8T12.2 7.4" fill="none" stroke="#102080" stroke-width="0.9"/><path d="M3 10.6Q7 8.8 12.2 9.8" fill="none" stroke="#c040e0" stroke-width="0.8"/><path d="M2.5 12.5H12.5" stroke="#e02020" stroke-dasharray="1 1"/></g></svg>
<div class="a" style="left:82px;top:274px;font-size:11px;font-weight:bold;letter-spacing:0.1px;color:#000">Graph2</div>
<div class="a" style="left:170px;top:274px;font-size:11px;font-weight:bold;color:#000">16KB</div>
<svg class="a" style="left:63px;top:291px" width="17" height="17" viewBox="0 0 17 17"><rect x="0.5" y="0.5" width="14" height="14" fill="#fff" stroke="#000"/><path d="M15.5 2V15.5H2" fill="none" stroke="#000" stroke-width="1.3"/><rect x="2.5" y="2.5" width="10" height="10" fill="#38e8f0"/><path d="M3 5.2Q4.5 4 6 4.8T9 4.5T12.2 4.2" fill="none" stroke="#102080" stroke-width="0.9"/><path d="M3 8.6Q5 7.2 7 7.8T12.2 7.4" fill="none" stroke="#102080" stroke-width="0.9"/><path d="M3 10.6Q7 8.8 12.2 9.8" fill="none" stroke="#c040e0" stroke-width="0.8"/><path d="M2.5 12.5H12.5" stroke="#e02020" stroke-dasharray="1 1"/></svg>
<div class="a" style="left:82px;top:293px;font-size:11px;color:#000">Graph1</div>
<div class="a" style="left:170px;top:293px;font-size:11px;color:#000">16KB</div>
<div class="a" style="left:60px;top:310px;width:165px;height:17px;border:1px dotted #222;border-right:none"></div>
<svg class="a" style="left:63px;top:310px" width="16" height="16" viewBox="0 0 16 16"><rect x="0.5" y="0.5" width="13.5" height="13.5" fill="#6a6ad0"/><g fill="#fff"><rect x="1.2" y="1.2" width="3.6" height="3"/><rect x="5.6" y="1.2" width="3.6" height="3"/><rect x="10" y="1.2" width="3.4" height="3"/></g><g fill="#f02020"><rect x="2" y="1.5" width="2" height="2.5"/><rect x="6.4" y="1.5" width="2" height="2.5"/><rect x="10.8" y="1.5" width="2" height="2.5"/></g><g fill="#50e850"><rect x="1.2" y="5" width="3.6" height="2"/><rect x="5.6" y="5" width="3.6" height="2"/><rect x="10" y="5" width="3.4" height="2"/><rect x="1.2" y="7.8" width="3.6" height="2"/><rect x="5.6" y="7.8" width="3.6" height="2"/><rect x="10" y="7.8" width="3.4" height="2"/><rect x="1.2" y="10.6" width="3.6" height="2.8"/><rect x="5.6" y="10.6" width="3.6" height="2.8"/><rect x="10" y="10.6" width="3.4" height="2.8"/></g><path d="M15 2V15H2" fill="none" stroke="#000" stroke-width="1.6"/></svg>
<div class="a" style="left:82px;top:312px;font-size:11px;color:#000">Book1</div>
<div class="a" style="left:170px;top:312px;font-size:11px;color:#000">12KB</div>
<!-- cursor -->
<svg class="a" style="left:117px;top:374px" width="14" height="22" viewBox="0 0 14 22"><path d="M1.5 1.5V17.5L5.2 14.2L8.3 19.8Q8.8 20.6 9.6 20.2L10.6 19.6Q11.2 19.1 10.9 18.4L8.2 12.8H13Z" fill="#fff" stroke="#000" stroke-width="1.1" stroke-linejoin="round"/></svg>

<!-- MDI -->
<div id="mdi" class="a"></div>
<!-- Graph1 window -->
<div class="a" style="left:234px;top:106px;width:310px;height:255px;border:1px solid #3c4044;border-radius:6px 6px 0 0;background:#c4e9f4;overflow:hidden">
  <div class="a" style="left:0;top:0;width:308px;height:31px;background:linear-gradient(#f4f8fc 0,#f4f8fc 1.5px,#c4ccd0 1.5px,#c4ccd0 6px,#b4cce6 6px,#b4cce6 14px,#d4d4d4 14px,#d4d4d4 17px,#b4cce6 17px,#b4cce6 20px,#d4d4d4 20px,#d4d4d4 25px,#c4ecf4 25px,#c4ecf4 31px)"></div>
  <div class="a" style="left:0;top:249px;width:41px;height:4px;background:#d4d8dc"></div>
</div>
<svg class="a" style="left:244px;top:117px" width="17" height="17" viewBox="0 0 17 17"><rect x="0.5" y="0.5" width="14" height="14" fill="#fff" stroke="#000"/><path d="M15.5 2V15.5H2" fill="none" stroke="#000" stroke-width="1.3"/><rect x="2.5" y="2.5" width="10" height="10" fill="#38e8f0"/><path d="M3 5.2Q4.5 4 6 4.8T9 4.5T12.2 4.2" fill="none" stroke="#102080" stroke-width="0.9"/><path d="M3 8.6Q5 7.2 7 7.8T12.2 7.4" fill="none" stroke="#102080" stroke-width="0.9"/><path d="M3 10.6Q7 8.8 12.2 9.8" fill="none" stroke="#c040e0" stroke-width="0.8"/><path d="M2.5 12.5H12.5" stroke="#e02020" stroke-dasharray="1 1"/></svg>
<div class="a" style="left:264px;top:119px;font-size:11.5px;color:#9696a4;white-space:nowrap">Graph1 *</div>
<div class="a" style="left:434px;top:116px;width:31px;height:18px;border:1px solid #7094bb;border-radius:3px;background:linear-gradient(#c8dcf0,#b8d0ea)"></div>
<div class="a" style="left:467px;top:116px;width:31px;height:18px;border:1px solid #7094bb;border-radius:3px;background:linear-gradient(#c8dcf0,#b8d0ea)"></div>
<div class="a" style="left:501px;top:116px;width:32px;height:18px;border:1px solid #7094bb;border-radius:3px;background:linear-gradient(#c8dcf0,#b8d0ea)"></div>
<div class="a" style="left:443px;top:125px;width:11px;height:4px;background:#f4f4f4;border:1px solid #555;border-radius:1px"></div>
<div class="a" style="left:477px;top:120px;width:11px;height:8px;background:#f4f4f4;border:1px solid #555;border-radius:1px"><div class="a" style="left:2px;top:2px;width:5px;height:2px;background:#8aa;border:0"></div></div>
<svg class="a" style="left:510px;top:119px" width="13" height="11" viewBox="0 0 13 11"><path d="M2.6 2.4L9.6 8.1M9.6 2.4L2.6 8.1" stroke="#3a4550" stroke-width="3.9" stroke-linecap="round"/><path d="M2.6 2.4L9.6 8.1M9.6 2.4L2.6 8.1" stroke="#f8f8f8" stroke-width="2.1" stroke-linecap="round"/></svg>
<div class="a" style="left:242px;top:137px;width:292px;height:214px;background:#fff;border-left:1px solid #606060;border-top:1px solid #606060;box-shadow:inset 1px 1px 0 #a8a8a8"></div>
<div class="a" style="left:521px;top:139px;width:13px;height:3px;background:#c8c8c8"></div>
<div class="a" style="left:245px;top:140px;width:19px;height:19px;background:#c0c0c0;border:1px solid;border-color:#fff #808080 #808080 #fff"></div><svg class="a" style="left:251px;top:144px" width="7" height="12" viewBox="0 0 7 12"><path d="M3.3 0.6H5.6V11.2H3.3V3.6Q2.2 4.6 0.6 5V2.9Q2.6 2.1 3.3 0.6Z" fill="#000"/></svg>

<!-- Graph2 window -->
<div class="a" style="left:275px;top:141px;width:282px;height:239px;border:2px solid #a6138e;border-radius:4px 4px 0 0;background:#b5cde6;overflow:hidden">
  <div class="a" style="left:0;top:0;width:278px;height:30px;background:linear-gradient(#9db5cd 0,#9db5cd 11px,#9dbde0 11px,#9dbde0 21px,#b5cde7 21px)"></div>
</div>
<svg class="a" style="left:285px;top:152px" width="17" height="17" viewBox="0 0 17 17"><rect x="0.5" y="0.5" width="14" height="14" fill="#fff" stroke="#000"/><path d="M15.5 2V15.5H2" fill="none" stroke="#000" stroke-width="1.3"/><rect x="2.5" y="2.5" width="10" height="10" fill="#38e8f0"/><path d="M3 5.2Q4.5 4 6 4.8T9 4.5T12.2 4.2" fill="none" stroke="#102080" stroke-width="0.9"/><path d="M3 8.6Q5 7.2 7 7.8T12.2 7.4" fill="none" stroke="#102080" stroke-width="0.9"/><path d="M3 10.6Q7 8.8 12.2 9.8" fill="none" stroke="#c040e0" stroke-width="0.8"/><path d="M2.5 12.5H12.5" stroke="#e02020" stroke-dasharray="1 1"/></svg>
<div class="a" style="left:305px;top:155px;font-size:11.5px;color:#1a1a3c;white-space:nowrap">Graph2 *</div>
<div class="a" style="left:447px;top:151px;width:32px;height:18px;border:1px solid #56687c;border-radius:3px;box-shadow:inset 0 0 0 1px rgba(255,255,255,0.45);background:linear-gradient(#c0d5ec,#b5cce6 50%,#a4bbd6 50%,#acc3dd)"></div>
<div class="a" style="left:481px;top:151px;width:32px;height:18px;border:1px solid #56687c;border-radius:3px;box-shadow:inset 0 0 0 1px rgba(255,255,255,0.45);background:linear-gradient(#c0d5ec,#b5cce6 50%,#a4bbd6 50%,#acc3dd)"></div>
<div class="a" style="left:515px;top:151px;width:32px;height:18px;border:1px solid #5a3430;border-radius:3px;box-shadow:inset 0 0 0 1px rgba(255,220,200,0.4);background:linear-gradient(#ecc0b2 0,#eab0a0 20%,#f09070 32%,#cc5232 42%,#c44a2c 62%,#c85a3c 78%,#dc8a70 100%)"></div>
<div class="a" style="left:457px;top:159px;width:11px;height:5px;background:#f4f4f4;border:1px solid #555;border-radius:1px"></div>
<div class="a" style="left:491px;top:156px;width:11px;height:8px;background:#f4f4f4;border:1px solid #555;border-radius:1px"><div class="a" style="left:2px;top:2px;width:5px;height:2px;background:#8aa;border:0"></div></div>
<svg class="a" style="left:525px;top:154px" width="13" height="11" viewBox="0 0 13 11"><path d="M2.6 2.4L9.6 8.1M9.6 2.4L2.6 8.1" stroke="#3a3030" stroke-width="3.9" stroke-linecap="round"/><path d="M2.6 2.4L9.6 8.1M9.6 2.4L2.6 8.1" stroke="#f8f8f8" stroke-width="2.1" stroke-linecap="round"/></svg>
<div class="a" style="left:283px;top:172px;width:265px;height:200px;background:#fff;border-left:1px solid #606060;border-top:1px solid #606060;border-right:1px solid #fff;border-bottom:1px solid #fff;box-shadow:inset 1px 1px 0 #a8a8a8"></div>
<div class="a" style="left:541px;top:173px;width:6px;height:197px;background:#c0c0c0"></div>
<div class="a" style="left:284px;top:369px;width:263px;height:1px;background:#d8d8d8"></div>
<div class="a" style="left:277px;top:236px;width:5px;height:26px;background:linear-gradient(#c2eef4 0,#c2eef4 12px,#e6edf5 12px)"></div>
<div class="a" style="left:550px;top:236px;width:5px;height:26px;background:linear-gradient(#c2eef4 0,#c2eef4 12px,#e6edf5 12px)"></div>
<div class="a" style="left:285px;top:174px;width:20px;height:20px;background:#c0c0c0"></div><svg class="a" style="left:292px;top:179px" width="7" height="12" viewBox="0 0 7 12"><path d="M3.3 0.6H5.6V11.2H3.3V3.6Q2.2 4.6 0.6 5V2.9Q2.6 2.1 3.3 0.6Z" fill="#000"/></svg>
<!-- chart -->
<svg class="a" style="left:284px;top:173px" width="257" height="196" viewBox="284 173 257 196">
  <g fill="#f5cd93" stroke="#000" stroke-width="1.2">
    <rect x="334.5" y="316.5" width="23" height="22"/>
    <rect x="363.5" y="294.5" width="23" height="44"/>
    <rect x="392.5" y="273" width="23" height="65.5"/>
    <rect x="421.5" y="251" width="23" height="87.5"/>
    <rect x="450.5" y="229" width="23" height="109.5"/>
    <rect x="479.5" y="208" width="23" height="130.5"/>
  </g>
  <path d="M331 197V339H505" fill="none" stroke="#000" stroke-width="1.3"/>
  <g stroke="#000" stroke-width="1">
    <path d="M327.5 338.5H331M327.5 316.5H331M327.5 294.5H331M327.5 273.5H331M327.5 251.5H331M327.5 229.5H331M327.5 208H331" stroke-width="1.4"/>
    <path d="M328.5 327.5H331M328.5 305.5H331M328.5 284H331M328.5 262H331M328.5 240H331M328.5 218.5H331M328.5 197.5H331"/>
    <path d="M346 339V341M375 339V341M404 339V341M433 339V341M462 339V341M491 339V341"/>
  </g>
  <g font-family="Liberation Sans" font-size="6" fill="#555" text-anchor="end">
    <text x="326.5" y="339.5">0</text><text x="326.5" y="317.5">1</text><text x="326.5" y="295.5">2</text><text x="326.5" y="274">3</text><text x="326.5" y="252">4</text><text x="326.5" y="230">5</text><text x="326.5" y="209">6</text>
  </g>
  <g font-family="Liberation Sans" font-size="6" fill="#555" text-anchor="middle">
    <text x="346" y="347">1</text><text x="375" y="347">2</text><text x="404" y="347">3</text><text x="433" y="347">4</text><text x="462" y="347">5</text><text x="491" y="347">6</text>
    <text x="418" y="358">A</text>
    <text x="0" y="0" transform="translate(319 268) rotate(-90)">B</text>
  </g>
  <rect x="474" y="181.6" width="27" height="11.4" fill="#000"/>
  <rect x="475" y="183" width="1.4" height="8" fill="#fff"/>
  <rect x="477" y="184" width="15.2" height="7" fill="#f5cd93"/>
  <rect x="492.4" y="183" width="7.6" height="9" fill="#fff"/>
  <text x="496.3" y="190.2" font-family="Liberation Sans" font-size="7" fill="#4a5a80" text-anchor="middle">B</text>
</svg>
</body></html>
